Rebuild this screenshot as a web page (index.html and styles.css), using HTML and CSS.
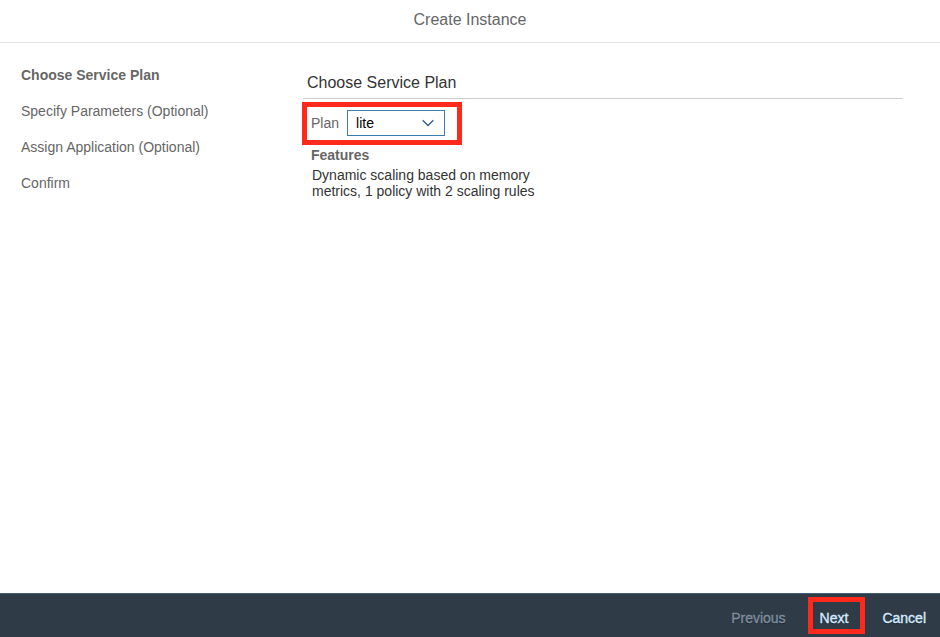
FILE: index.html
```html
<!DOCTYPE html>
<html lang="en">
<head>
<meta charset="utf-8">
<title>Create Instance</title>
<meta name="viewport" content="width=device-width, initial-scale=1">
<link rel="stylesheet" href="styles.css">
</head>
<body>
<header class="header">
  <h1 class="title">Create Instance</h1>
</header>
<div class="content">
  <nav class="steps">
    <ol class="step-list">
      <li class="step step-current" aria-current="step">Choose Service Plan</li>
      <li class="step">Specify Parameters (Optional)</li>
      <li class="step">Assign Application (Optional)</li>
      <li class="step">Confirm</li>
    </ol>
  </nav>
  <main class="panel">
    <h2 class="panel-title">Choose Service Plan</h2>
    <div class="plan highlight">
      <label class="plan-label" for="plan">Plan</label>
      <div class="select-wrap">
        <select class="select" id="plan">
          <option>lite</option>
        </select>
        <svg class="chevron" width="12" height="8" viewBox="0 0 12 8" aria-hidden="true">
          <path d="M0.7 1.2 L6 6.4 L11.3 1.2" fill="none" stroke="#346187" stroke-width="1.4"/>
        </svg>
      </div>
    </div>
    <h3 class="features-title">Features</h3>
    <p class="features">Dynamic scaling based on memory metrics, 1 policy with 2 scaling rules</p>
  </main>
</div>
<footer class="footer">
  <button class="button" type="button" disabled>Previous</button>
  <div class="next highlight">
    <button class="button" type="button">Next</button>
  </div>
  <button class="button" type="button">Cancel</button>
</footer>
</body>
</html>
```
FILE: styles.css
```css
* {
  box-sizing: border-box;
}

body {
  margin: 0;
  min-height: 100vh;
  display: flex;
  flex-direction: column;
  background: #fff;
  color: #333;
  font-family: "Liberation Sans", Arial, sans-serif;
  font-size: 14px;
  line-height: 16px;
}

h1, h2, h3, p, ol {
  margin: 0;
  padding: 0;
}

.header {
  padding: 10px 0 12px;
  border-bottom: 1px solid #e5e5e5;
  text-align: center;
}

.title {
  font-size: 16px;
  line-height: 20px;
  font-weight: normal;
  color: #666;
}

.content {
  flex: 1;
  display: grid;
  grid-template-columns: 281px 1fr;
  padding: 14px 37px 14px 21px;
}

.step-list {
  list-style: none;
}

.step {
  line-height: 36px;
  color: #666;
}

.step-current {
  font-weight: bold;
}

.panel-title {
  margin: 0 0 3px 1px;
  padding: 16px 4px 5px;
  border-bottom: 1px solid #ccc;
  font-size: 16px;
  line-height: 20px;
  font-weight: normal;
}

.highlight {
  border: 5px solid #ff2a1c;
}

.plan {
  display: flex;
  align-items: center;
  gap: 8px;
  width: fit-content;
  padding: 3px 12px 4px 4px;
}

.plan-label {
  color: #666;
}

.select-wrap {
  position: relative;
  width: 98px;
}

.select {
  display: block;
  width: 100%;
  height: 26px;
  padding: 0 24px 0 8px;
  border: 1px solid #3f7cac;
  border-radius: 0;
  background: #fff;
  color: #000;
  font: inherit;
  appearance: none;
}

.chevron {
  position: absolute;
  right: 11px;
  top: 9px;
  pointer-events: none;
}

.features-title {
  margin: 2px 0 4px;
  padding-left: 9px;
  font-size: 14px;
  line-height: 16px;
  color: #666;
}

.features {
  max-width: 250px;
  padding-left: 10px;
}

.footer {
  display: flex;
  justify-content: flex-end;
  align-items: center;
  padding: 3px 14px 3px;
  border-top: 1px solid #475e75;
  background: #2f3c48;
}

.next {
  margin: 0 17px 0 22px;
  padding: 2px 12px 1px 7px;
}

.button {
  display: block;
  padding: 6px 0 2px;
  border: 0;
  background: none;
  color: #d5eaff;
  font: inherit;
  line-height: 16px;
  -webkit-text-stroke: 0.4px;
  text-shadow: 0 1px 1px #0008;
}

.button:disabled {
  color: #7d8d9c;
}
```
